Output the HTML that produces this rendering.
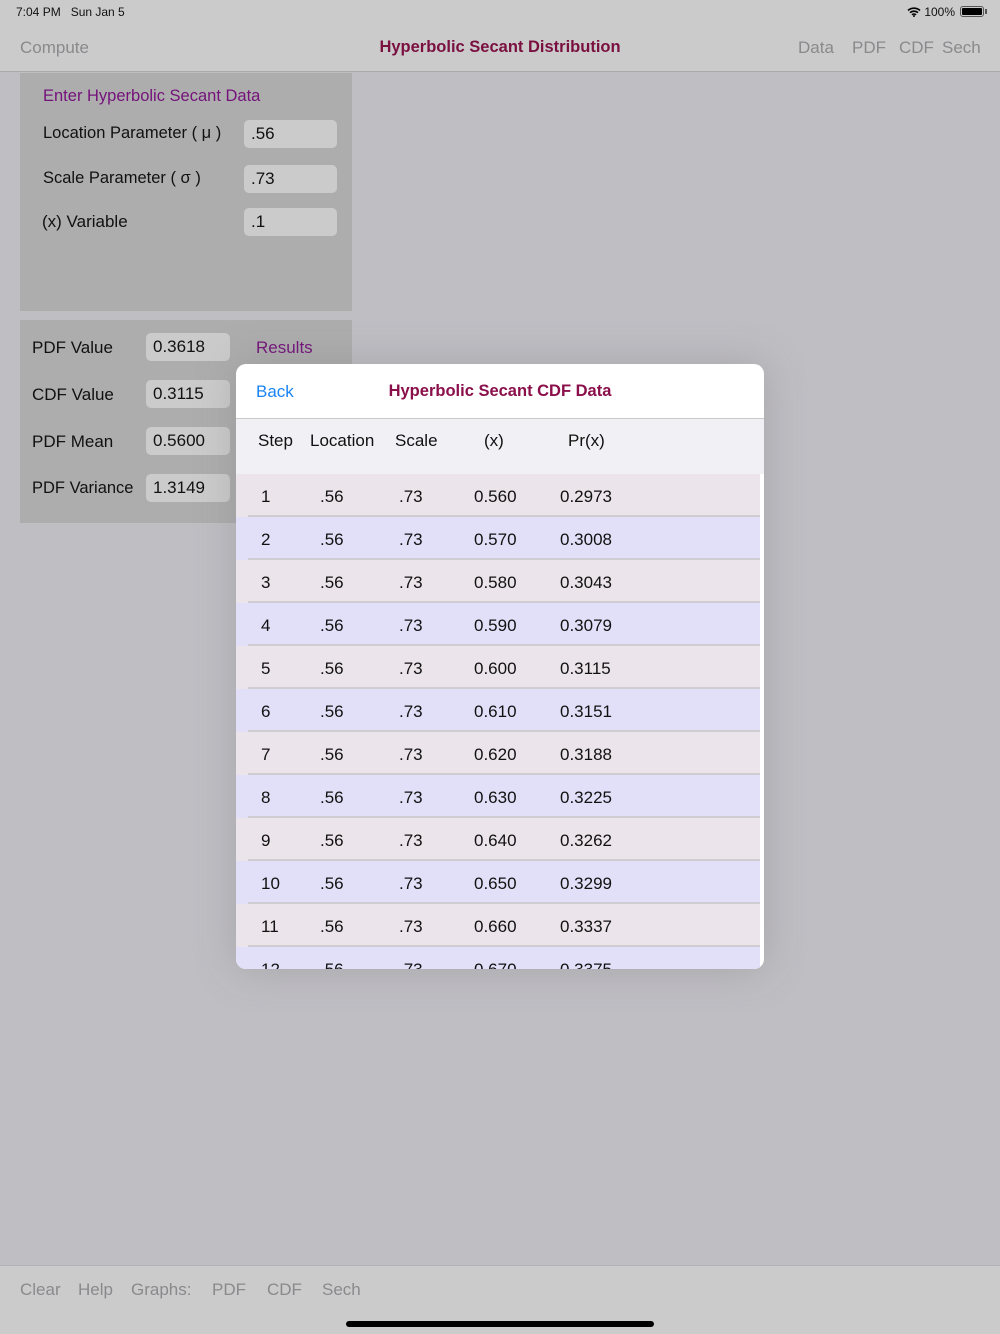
<!DOCTYPE html>
<html><head><meta charset="utf-8"><style>
*{margin:0;padding:0;box-sizing:border-box}
body{width:1000px;height:1334px;background:#bfbec3;font-family:"Liberation Sans",sans-serif;position:relative;overflow:hidden;color:#111}
.a{position:absolute;white-space:nowrap}
.nav{left:0;top:0;width:1000px;height:72px;background:#cbcbcc;border-bottom:1px solid #aaaaab}
.g{color:#8a8a8c;font-size:17px}
.panel{background:#adadae}
.tf{background:#cbcbcb;border-radius:5px;font-size:17px;padding:0 0 0 7px;line-height:28px;height:28px}
.lbl{font-size:17px}
.card{left:236px;top:364px;width:528px;height:605px;background:#fff;border-radius:10px;overflow:hidden;box-shadow:0 0 40px rgba(120,120,120,.35)}
.row{position:absolute;left:0;width:524px;height:43px;font-size:17px}
.row:after{content:"";position:absolute;left:12px;right:0;bottom:0;height:2px;background:#cfcdd2}
.row span{position:absolute;top:13px}
</style></head><body>
<div class="a nav"></div>
<div class="a" style="left:16px;top:5px;font-size:12px">7:04 PM&nbsp;&nbsp;&nbsp;Sun Jan 5</div>
<div class="a" style="left:907px;top:5px;font-size:12px">
<svg width="14" height="10" viewBox="0 0 14 10" style="vertical-align:-1px"><path d="M1 3.5a9 9 0 0 1 12 0M3 5.7a6 6 0 0 1 8 0M5 7.8a3 3 0 0 1 4 0" stroke="#000" stroke-width="1.6" fill="none"/><circle cx="7" cy="9" r="1" fill="#000"/></svg> 100%</div>
<div class="a" style="left:960px;top:6px;width:24px;height:11px;border:1px solid #555;border-radius:3px;padding:1px"><div style="background:#000;width:100%;height:100%;border-radius:1px"></div></div>
<div class="a" style="left:985px;top:9px;width:2px;height:5px;background:#555"></div>
<div class="a g" style="left:20px;top:38px">Compute</div>
<div class="a" style="left:0;width:1000px;text-align:center;top:38px;font-size:16.5px;font-weight:bold;color:#7a1040">Hyperbolic Secant Distribution</div>
<div class="a g" style="left:798px;top:38px">Data</div>
<div class="a g" style="left:852px;top:38px">PDF</div>
<div class="a g" style="left:899px;top:38px">CDF</div>
<div class="a g" style="left:942px;top:38px">Sech</div>

<div class="a panel" style="left:20px;top:73px;width:332px;height:238px"></div>
<div class="a" style="left:43px;top:87px;font-size:16.5px;color:#74127a">Enter Hyperbolic Secant Data</div>
<div class="a lbl" style="left:43px;top:124px;font-size:16.5px">Location Parameter ( μ )</div>
<div class="a tf" style="left:244px;top:120px;width:93px">.56</div>
<div class="a lbl" style="left:43px;top:169px;font-size:16.5px">Scale Parameter ( σ )</div>
<div class="a tf" style="left:244px;top:165px;width:93px">.73</div>
<div class="a lbl" style="left:42px;top:212px">(x) Variable</div>
<div class="a tf" style="left:244px;top:208px;width:93px">.1</div>

<div class="a panel" style="left:20px;top:320px;width:332px;height:203px"></div>
<div class="a lbl" style="left:32px;top:338px">PDF Value</div>
<div class="a tf" style="left:146px;top:333px;width:84px">0.3618</div>
<div class="a" style="left:256px;top:338px;font-size:17px;color:#74127a">Results</div>
<div class="a lbl" style="left:32px;top:385px">CDF Value</div>
<div class="a tf" style="left:146px;top:380px;width:84px">0.3115</div>
<div class="a lbl" style="left:32px;top:432px">PDF Mean</div>
<div class="a tf" style="left:146px;top:427px;width:84px">0.5600</div>
<div class="a lbl" style="left:32px;top:479px;font-size:16.5px">PDF Variance</div>
<div class="a tf" style="left:146px;top:474px;width:84px">1.3149</div>

<div class="a card">
<div class="a" style="left:20px;top:18px;font-size:17px;color:#1a84f2">Back</div>
<div class="a" style="left:0;width:528px;text-align:center;top:18px;font-size:16.5px;font-weight:bold;color:#8a0f4a">Hyperbolic Secant CDF Data</div>
<div class="a" style="left:0;top:54px;width:528px;height:56px;background:#f1f0f5;border-top:1px solid #c9c9cc"></div>
<div class="a" style="left:22px;top:67px;font-size:17px">Step</div>
<div class="a" style="left:74px;top:67px;font-size:17px">Location</div>
<div class="a" style="left:159px;top:67px;font-size:17px">Scale</div>
<div class="a" style="left:248px;top:67px;font-size:17px">(x)</div>
<div class="a" style="left:332px;top:67px;font-size:17px">Pr(x)</div>
<div class="a" style="left:0;top:110px;width:524px;height:495px;background:#fff">
<div class="row" style="top:0;background:#ebe4ea"><span style="left:25px">1</span><span style="left:84px">.56</span><span style="left:163px">.73</span><span style="left:238px">0.560</span><span style="left:324px">0.2973</span></div>
<div class="row" style="top:43px;background:#e1e0f8"><span style="left:25px">2</span><span style="left:84px">.56</span><span style="left:163px">.73</span><span style="left:238px">0.570</span><span style="left:324px">0.3008</span></div>
<div class="row" style="top:86px;background:#ebe4ea"><span style="left:25px">3</span><span style="left:84px">.56</span><span style="left:163px">.73</span><span style="left:238px">0.580</span><span style="left:324px">0.3043</span></div>
<div class="row" style="top:129px;background:#e1e0f8"><span style="left:25px">4</span><span style="left:84px">.56</span><span style="left:163px">.73</span><span style="left:238px">0.590</span><span style="left:324px">0.3079</span></div>
<div class="row" style="top:172px;background:#ebe4ea"><span style="left:25px">5</span><span style="left:84px">.56</span><span style="left:163px">.73</span><span style="left:238px">0.600</span><span style="left:324px">0.3115</span></div>
<div class="row" style="top:215px;background:#e1e0f8"><span style="left:25px">6</span><span style="left:84px">.56</span><span style="left:163px">.73</span><span style="left:238px">0.610</span><span style="left:324px">0.3151</span></div>
<div class="row" style="top:258px;background:#ebe4ea"><span style="left:25px">7</span><span style="left:84px">.56</span><span style="left:163px">.73</span><span style="left:238px">0.620</span><span style="left:324px">0.3188</span></div>
<div class="row" style="top:301px;background:#e1e0f8"><span style="left:25px">8</span><span style="left:84px">.56</span><span style="left:163px">.73</span><span style="left:238px">0.630</span><span style="left:324px">0.3225</span></div>
<div class="row" style="top:344px;background:#ebe4ea"><span style="left:25px">9</span><span style="left:84px">.56</span><span style="left:163px">.73</span><span style="left:238px">0.640</span><span style="left:324px">0.3262</span></div>
<div class="row" style="top:387px;background:#e1e0f8"><span style="left:25px">10</span><span style="left:84px">.56</span><span style="left:163px">.73</span><span style="left:238px">0.650</span><span style="left:324px">0.3299</span></div>
<div class="row" style="top:430px;background:#ebe4ea"><span style="left:25px">11</span><span style="left:84px">.56</span><span style="left:163px">.73</span><span style="left:238px">0.660</span><span style="left:324px">0.3337</span></div>
<div class="row" style="top:473px;background:#e1e0f8"><span style="left:25px">12</span><span style="left:84px">.56</span><span style="left:163px">.73</span><span style="left:238px">0.670</span><span style="left:324px">0.3375</span></div>
</div>
</div>

<div class="a" style="left:0;top:1265px;width:1000px;height:69px;background:#cbcbcc;border-top:1px solid #b3b3b5"></div>
<div class="a g" style="left:20px;top:1280px">Clear</div>
<div class="a g" style="left:78px;top:1280px">Help</div>
<div class="a g" style="left:131px;top:1280px">Graphs:</div>
<div class="a g" style="left:212px;top:1280px">PDF</div>
<div class="a g" style="left:267px;top:1280px">CDF</div>
<div class="a g" style="left:322px;top:1280px">Sech</div>
<div class="a" style="left:346px;top:1321px;width:308px;height:6px;border-radius:3px;background:#000"></div>
</body></html>
